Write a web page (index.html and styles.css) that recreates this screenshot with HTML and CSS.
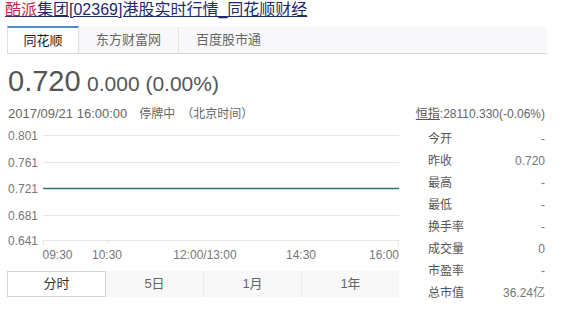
FILE: index.html
```html
<!DOCTYPE html>
<html lang="zh-CN">
<head>
  <meta charset="UTF-8">
  <title>酷派集团[02369]港股实时行情_同花顺财经</title>
  <link rel="stylesheet" href="styles.css">
</head>
<body>
  <h1 class="title"><a href="#"><span class="hl">酷派</span>集团[02369]港股实时行情_同花顺财经</a></h1>

  <div class="tabs">
    <div class="tab active">同花顺</div>
    <div class="tab">东方财富网</div>
    <div class="tab">百度股市通</div>
  </div>

  <div class="quote">
    <div class="price"><span class="last">0.720</span> <span class="chg">0.000 (0.00%)</span></div>
    <div class="info">
      <div class="time">2017/09/21 16:00:00<span class="status">停牌中</span><span class="zone">（北京时间）</span></div>
      <div class="index"><a href="#">恒指</a>:28110.330(-0.06%)</div>
    </div>
  </div>

  <div class="main">
    <div class="chart-col">
      <svg class="chart" width="400" height="142" viewBox="0 0 400 142">
        <g class="grid">
          <line x1="43" y1="14.5" x2="399" y2="14.5" />
          <line x1="43" y1="41.5" x2="399" y2="41.5" />
          <line x1="43" y1="94.5" x2="399" y2="94.5" />
          <line x1="43" y1="119.5" x2="399" y2="119.5" />
          <line x1="43.5" y1="119" x2="43.5" y2="125" />
          <line x1="107.5" y1="119" x2="107.5" y2="123" />
          <line x1="398.5" y1="119" x2="398.5" y2="125" />
        </g>
        <line class="price-line" x1="43" y1="67.5" x2="399" y2="67.5" />
        <g class="ylab">
          <text x="8" y="18.5">0.801</text>
          <text x="8" y="45.5">0.761</text>
          <text x="8" y="71.5">0.721</text>
          <text x="8" y="98.5">0.681</text>
          <text x="8" y="123.5">0.641</text>
        </g>
        <g class="xlab">
          <text x="57.5" y="137.5">09:30</text>
          <text x="107" y="137.5">10:30</text>
          <text x="205" y="137.5">12:00/13:00</text>
          <text x="301" y="137.5">14:30</text>
          <text x="384" y="137.5">16:00</text>
        </g>
      </svg>
      <div class="periods">
        <div class="period active">分时</div>
        <div class="period">5日</div>
        <div class="period">1月</div>
        <div class="period last-p">1年</div>
      </div>
    </div>

    <table class="stats">
      <tr><td>今开</td><td>-</td></tr>
      <tr><td>昨收</td><td>0.720</td></tr>
      <tr><td>最高</td><td>-</td></tr>
      <tr><td>最低</td><td>-</td></tr>
      <tr><td>换手率</td><td>-</td></tr>
      <tr><td>成交量</td><td>0</td></tr>
      <tr><td>市盈率</td><td>-</td></tr>
      <tr><td>总市值</td><td>36.24亿</td></tr>
    </table>
  </div>
</body>
</html>
```

FILE: styles.css
```css
body {
  margin: 0;
  background: #fff;
  font-family: "Liberation Sans", Arial, "Noto Sans CJK SC", sans-serif;
  color: #555;
}
.title {
  margin: 0;
  padding: 0 5px;
  font-size: 16px;
  line-height: 20px;
  font-weight: normal;
}
.title a {
  color: #1f2a6b;
  text-decoration: underline;
}
.title .hl {
  color: #c22a3c;
}
.tabs {
  display: flex;
  margin: 7px 15px 0 7px;
  height: 26px;
  background: #f8f8fa;
  border-bottom: 1px solid #d6d6d6;
  font-size: 13px;
}
.tab {
  width: 85px;
  line-height: 26px;
  text-align: center;
  color: #666;
  border-right: 1px solid #e6e6e6;
  padding: 0 7px;
}
.tab:first-child {
  padding: 0;
}
.tab:last-child {
  border-right: none;
}
.tab.active {
  width: 70px;
  color: #222;
  background: #fff;
  border-top: 2px solid #4a8fc7;
  border-left: 1px solid #e0e0e0;
  border-right: 1px solid #e0e0e0;
  line-height: 25px;
  height: 25px;
  margin-top: -1px;
  margin-bottom: -1px;
}
.quote {
  padding: 10px 17px 0 8px;
}
.price {
  line-height: 34px;
  white-space: nowrap;
}
.last {
  font-size: 29px;
}
.chg {
  font-size: 21px;
  margin-left: 2px;
}
.info {
  display: flex;
  justify-content: space-between;
  margin-top: 3px;
  line-height: 16px;
}
.time {
  font-size: 13px;
  color: #666;
}
.status {
  margin-left: 12px;
  font-size: 12px;
}
.zone {
  margin-left: 6px;
  font-size: 12px;
}
.index {
  font-size: 12px;
  color: #666;
}
.index a {
  color: #555;
  text-decoration: underline;
}
.main {
  display: flex;
  margin-top: -1px;
}
.chart {
  display: block;
}
.grid line {
  stroke: #e6e6e6;
  stroke-width: 1;
}
.price-line {
  stroke: #2f6f73;
  stroke-width: 1.5;
}
.ylab text,
.xlab text {
  font-family: "Liberation Sans", Arial, sans-serif;
  font-size: 12px;
  fill: #777;
}
.xlab text {
  text-anchor: middle;
}
.periods {
  display: flex;
  margin: 8px 0 0 7px;
  width: 392px;
  height: 26px;
  background: #f8f8f8;
  font-size: 13px;
}
.period {
  flex: 1;
  text-align: center;
  line-height: 26px;
  color: #666;
  border-right: 1px solid #ececec;
}
.period.last-p {
  border-right: none;
}
.period.active {
  background: #fff;
  color: #333;
  border: 1px solid #d4d4d4;
  line-height: 24px;
}
.stats {
  margin: 7px 0 0 28px;
  width: 117px;
  border-collapse: collapse;
  font-size: 12px;
  align-self: flex-start;
}
.stats td {
  padding: 0;
  height: 22px;
  line-height: 22px;
  color: #555;
}
.stats td:last-child {
  text-align: right;
  color: #777;
}
```
